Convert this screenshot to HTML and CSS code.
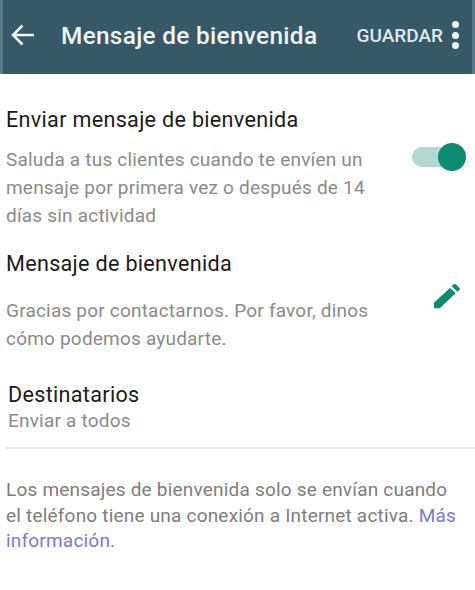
FILE: index.html
```html
<!DOCTYPE html>
<html lang="es">
<head>
<meta charset="utf-8">
<title>Mensaje de bienvenida</title>
<link rel="stylesheet" href="styles.css">
</head>
<body>
<header class="appbar">
  <svg class="back" width="26" height="24" viewBox="0 0 26 24"><path d="M24 12H3M12.500 2.500 3 12l9.500 9.500" fill="none" stroke="#eef5f7" stroke-width="2.600"/></svg>
  <h1 class="title">Mensaje de bienvenida</h1>
  <span class="save">GUARDAR</span>
  <span class="dots"><i></i><i></i><i></i></span>
</header>
<main>
  <section class="sec-send">
    <h2 class="head">Enviar mensaje de bienvenida</h2>
    <div class="row">
      <p class="desc">Saluda a tus clientes cuando te envíen un mensaje por primera vez o después de 14 días sin actividad</p>
      <div class="switch"><span class="track"></span><span class="thumb"></span></div>
    </div>
  </section>
  <section class="sec-msg">
    <h2 class="head">Mensaje de bienvenida</h2>
    <div class="row">
      <p class="desc">Gracias por contactarnos. Por favor, dinos cómo podemos ayudarte.</p>
      <svg class="pencil" width="29" height="27" viewBox="0 0 30 30" preserveAspectRatio="none"><path d="M2 28v-6L18.500 5.500l6 6L8 28Z" fill="#0d8a72"/><path d="M20.300 3.700 22.500 1.500q1-1 2 0l4 4q1 1 0 2l-2.200 2.200Z" fill="#0d8a72"/></svg>
    </div>
  </section>
  <section class="sec-to">
    <h2 class="head">Destinatarios</h2>
    <p class="sub">Enviar a todos</p>
  </section>
  <hr class="rule">
  <p class="note">Los mensajes de bienvenida solo se envían cuando el teléfono tiene una conexión a Internet activa. <a class="link" href="#">Más información.</a></p>
</main>
</body>
</html>
```

FILE: styles.css
```css
html, body { margin: 0; padding: 0; }
body { width: 475px; height: 590px; overflow: hidden; background: #fff; font-family: Roboto, "Liberation Sans", sans-serif; }
.appbar { height: 74px; box-sizing: border-box; background: #375866; border-left: 3px solid #5a7885; border-right: 3px solid #5a7885; display: flex; align-items: center; padding: 0 0 4px 7px; }
.back { flex: none; }
.title { margin: 0 0 0 25px; font-size: 24.400px; font-weight: 500; color: #eef5f7; letter-spacing: 0.3px; white-space: nowrap; }
.save { margin-left: auto; font-size: 19px; font-weight: 500; color: #dfeaee; }
.dots { display: flex; flex-direction: column; gap: 3.500px; margin: 0 13px 0 9px; }
.dots i { width: 7px; height: 7px; border-radius: 50%; background: #eef5f7; }
.head { margin: 0; font-size: 21.600px; font-weight: 400; color: #1b1b1b; letter-spacing: 0.3px; }
.row { display: flex; justify-content: space-between; align-items: center; }
.desc { margin: 0; width: 385px; font-size: 19px; line-height: 28px; color: #8a8a8a; letter-spacing: 0.2px; }
.sec-send { padding: 33px 0 0 6px; }
.sec-send .desc { margin-top: 14px; }
.switch { position: relative; width: 54px; height: 28px; margin: -48px 9px 0 0; flex: none; }
.track { position: absolute; left: 0; top: 4px; width: 46px; height: 20px; border-radius: 10px; background: #b2d8d0; }
.thumb { position: absolute; right: 0; top: 0; width: 28px; height: 28px; border-radius: 50%; background: #0d8a72; }
.sec-msg { padding: 21px 0 0 6px; }
.sec-msg .desc { margin-top: 21px; }
.pencil { margin: -37px 14px 0 0; flex: none; }
.sec-to { padding: 29px 0 0 8px; }
.sub { margin: 2px 0 0; font-size: 19px; color: #8a8a8a; letter-spacing: 0.2px; }
.rule { margin: 15px 0 0 5px; border: 0; height: 2px; background: #e8e8e8; }
.note { margin: 28px 0 0 6px; width: 460px; font-size: 19px; line-height: 25.500px; color: #7d7d7d; letter-spacing: 0.2px; }
.link { color: #7c79d0; text-decoration: none; }
```
